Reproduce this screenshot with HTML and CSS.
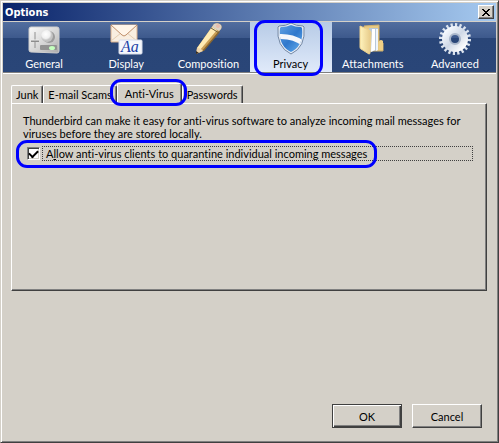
FILE: index.html
```html
<!DOCTYPE html>
<html lang="en">
<head>
    <meta charset="UTF-8">
    <meta name="viewport" content="width=device-width, initial-scale=1.0">
    <title>Options</title>
    <link rel="stylesheet" href="styles.css">
</head>
<body>
<div class="window">
    <header class="titlebar">
        <h1>Options</h1>
        <button type="button" class="close" aria-label="Close">
            <svg width="8" height="7" viewBox="0 0 8 7" shape-rendering="crispEdges"><path d="M0 0h2v1h1v1h2v-1h1v-1h2v1h-1v1h-1v1h-1v1h1v1h1v1h1v1h-2v-1h-1v-1h-2v1h-1v1h-2v-1h1v-1h1v-1h1v-1h-1v-1h-1v-1h-1z"/></svg>
        </button>
    </header>

    <nav class="toolbar">
        <button type="button" class="tool">
            <svg width="34" height="32" viewBox="0 0 34 32">
                <defs><linearGradient id="panelFill" x2="1" y2="1"><stop stop-color="#fafafa"/><stop offset=".6" stop-color="#d2d2d2"/><stop offset="1" stop-color="#a8a8a8"/></linearGradient>
                <radialGradient id="knob" cx=".4" cy=".35"><stop stop-color="#fff"/><stop offset=".7" stop-color="#f0f0f0"/><stop offset="1" stop-color="#c4c4c4"/></radialGradient></defs>
                <path d="M4 4L30 4Q32 4 32 6L32 28Q32 30 30 30L4 29Q2 29 2 27L2 6Q2 4 4 4z" fill="url(#panelFill)" stroke="#cfcfcf"/>
                <path d="M8 9v16" stroke="#909090"/><path d="M4 18h8" stroke="#8c8c8c" stroke-width="2"/><path d="M4 17h8" stroke="#eee"/>
                <circle cx="22" cy="14" r="6" fill="#9c9c9c"/><circle cx="20" cy="13" r="6" fill="url(#knob)"/>
                <rect x="13" y="22" width="17" height="5" rx="1" fill="#929292"/><ellipse cx="25" cy="25" rx="3" ry="2" fill="#c4ffbe"/>
            </svg>
            <span>General</span>
        </button>
        <button type="button" class="tool">
            <svg width="34" height="32" viewBox="0 0 34 32">
                <path d="M2 2h26v17H2z" fill="#f9eee0" stroke="#d9b08c"/><path d="M2 18l10-8M28 18l-10-8" fill="none" stroke="#e5cdb2"/>
                <path d="M2 2l11 10q2 2 4 0L28 2" fill="#fff5e9" stroke="#c08f6a"/>
                <rect x="10" y="17" width="23" height="14" rx="1" fill="#f5f7fc" stroke="#d6dcea"/>
                <text x="12" y="29" class="glyph">Aa</text>
            </svg>
            <span>Display</span>
        </button>
        <button type="button" class="tool">
            <svg width="34" height="32" viewBox="0 0 34 32">
                <path d="M6 25L23 1q4-2 7 1 1 2 0 4L12 28l-7 3z" fill="#c99e55"/>
                <path d="M6 25L21 4l5 3L9 27z" fill="#ffebb4"/><path d="M11 28L28 8l1 1L13 28z" fill="#8b672f"/>
                <path d="M6 25q4 0 6 3l-7 3z" fill="#efd6ae"/><path d="M5 28l3 2-3 1z" fill="#33291f"/>
                <path d="M21 4l2-3q4-2 7 1 1 2 0 4l-2 2z" fill="#dcd3c6"/><path d="M20 5l8 5" stroke="#70613e"/>
                <circle cx="27" cy="3" r="2" fill="#e8bdad"/>
            </svg>
            <span>Composition</span>
        </button>
        <button type="button" class="tool selected">
            <svg width="34" height="32" viewBox="0 0 34 32">
                <defs><linearGradient id="shieldBlue" x2="1" y2="1"><stop stop-color="#6aa9e8"/><stop offset=".5" stop-color="#2f78cc"/><stop offset="1" stop-color="#78c0f8"/></linearGradient>
                <clipPath id="shieldShape"><path d="M7 4q6 0 10-2 4 2 10 2l1 1q2 18-11 24Q4 23 6 5z"/></clipPath></defs>
                <path d="M5 3q7 0 12-3 5 3 12 3l1 1q2 20-13 27Q2 24 4 4z" fill="#e8edf5" stroke="#7186a3"/>
                <g clip-path="url(#shieldShape)"><path d="M3 0h28v32H3z" fill="url(#shieldBlue)"/>
                <path d="M4 11Q19 10 30 18v6Q19 15 4 16z" fill="#f5f7fb"/></g>
            </svg>
            <span>Privacy</span>
            <i class="mark mark-tool"></i>
        </button>
        <button type="button" class="tool">
            <svg width="34" height="32" viewBox="0 0 34 32">
                <defs><linearGradient id="folder" x2="1"><stop stop-color="#fff3bd"/><stop offset="1" stop-color="#e6c987"/></linearGradient></defs>
                <path d="M8 3l15-1v17l4 1v8H12z" fill="#e7ca83" stroke="#d0b06c"/>
                <path d="M13 5h9v22l-9 2z" fill="#b8c7d8"/><path d="M16 6h3v21l-4 2z" fill="#fff"/><path d="M20 6h2v21l-2 1z" fill="#edf4fc"/>
                <path d="M4 3l9 4q2 1 2 3l-1 20q0 1-1 1L5 26q-1 0-1-2z" fill="url(#folder)" stroke="#edd18e"/>
                <path d="M23 18q2-2 4 0v9h-4z" fill="#f0d086"/>
            </svg>
            <span>Attachments</span>
        </button>
        <button type="button" class="tool">
            <svg width="34" height="32" viewBox="0 0 34 32">
                <defs><linearGradient id="gear" x2="1" y2="1"><stop stop-color="#f8fbff"/><stop offset=".5" stop-color="#cfd8e6"/><stop offset="1" stop-color="#fff"/></linearGradient></defs>
                <circle cx="17" cy="16" r="14" fill="none" stroke="#dce4ef" stroke-width="4" stroke-dasharray="2 2" pathLength="80"/>
                <circle cx="17" cy="16" r="9" fill="none" stroke="url(#gear)" stroke-width="8"/>
                <circle cx="17" cy="16" r="5" fill="none" stroke="#a9b6ca" stroke-width="2"/>
            </svg>
            <span>Advanced</span>
        </button>
    </nav>

    <main class="content">
        <div class="tabs" role="tablist">
            <button type="button" class="tab" role="tab">Junk</button>
            <button type="button" class="tab" role="tab">E-mail Scams</button>
            <button type="button" class="tab active" role="tab" aria-selected="true">Anti-Virus<i class="mark mark-tab"></i></button>
            <button type="button" class="tab" role="tab">Passwords</button>
        </div>
        <section class="panel" role="tabpanel">
            <p>Thunderbird can make it easy for anti-virus software to analyze incoming mail messages for viruses before they are stored locally.</p>
            <div class="option">
                <input type="checkbox" id="quarantine" accesskey="l" checked>
                <label for="quarantine">A<u>l</u>low anti-virus clients to quarantine individual incoming messages</label>
                <i class="mark mark-option"></i>
            </div>
        </section>
    </main>

    <footer class="actions">
        <button type="button" class="btn default">OK</button>
        <button type="button" class="btn">Cancel</button>
    </footer>
</div>
</body>
</html>
```
FILE: styles.css
```css
* {
    box-sizing: border-box;
}
body {
    margin: 0;
    background: #d4d0c8;
    color: #000;
    font: 11px/13px Lato, "Liberation Sans", sans-serif;
    font-variant-ligatures: none;
}
button {
    font: inherit;
    font-variant-ligatures: none;
    color: inherit;
    padding: 0;
    border: 0;
    background: none;
}
.window {
    min-height: 100vh;
    display: flex;
    flex-direction: column;
    padding: 1px;
    border: 1px solid;
    border-color: #d4d0c8 #404040 #404040 #d4d0c8;
    box-shadow: inset 1px 1px #fff, inset -1px -1px #808080;
}

/* title bar */
.titlebar {
    display: flex;
    align-items: center;
    justify-content: space-between;
    height: 18px;
    margin: 1px 1px 0;
    padding: 0 2px;
    background: linear-gradient(to right, #0a246a, #a6caf0);
    color: #fff;
}
.titlebar h1 {
    margin: 0;
    font: bold 11px/13px "DejaVu Sans Condensed", sans-serif;
}
.close {
    display: flex;
    align-items: center;
    justify-content: center;
    width: 16px;
    height: 14px;
    background: #d4d0c8;
    color: #000;
    border: 1px solid;
    border-color: #fff #404040 #404040 #fff;
    box-shadow: inset -1px -1px #808080;
}

/* category toolbar */
.toolbar {
    display: flex;
    height: 51px;
    margin: 1px 1px 0;
    background: linear-gradient(#526e9f, #3d598c 16px, #294577 16px, #2a4678);
    border-bottom: 1px solid #808080;
    box-shadow: 0 1px #fff;
    color: #fff;
}
.tool {
    position: relative;
    flex: 1;
    display: flex;
    flex-direction: column;
    align-items: center;
    justify-content: space-between;
    padding: 1px 0 2px;
}
.tool.selected {
    color: #000;
    background: linear-gradient(#b7cbe6, #e0eafa);
}
.glyph {
    font: italic 16px "Liberation Serif", serif;
    fill: #173fa6;
}

/* tabs and panel */
.content {
    flex: 1;
    padding: 10px 10px 0 9px;
}
.tabs {
    display: flex;
    align-items: flex-end;
}
.tab {
    position: relative;
    height: 18px;
    padding: 0 4px;
    border: 1px solid;
    border-color: #fff #404040 transparent #fff;
    border-bottom: 0;
    border-radius: 2px 2px 0 0;
    box-shadow: inset -1px 0 #808080;
}
.tab.active {
    height: 21px;
    padding: 0 7px 2px;
    background: #d4d0c8;
    margin-bottom: -1px;
    z-index: 1;
}
.panel {
    height: 188px;
    padding: 10px 13px 10px 11px;
    border: 1px solid;
    border-color: #fff #404040 #404040 #fff;
    box-shadow: inset -1px -1px #808080;
}
.panel p {
    margin: 0 0 6px;
}
.option {
    position: relative;
    display: flex;
    align-items: center;
    gap: 2px;
    padding-left: 4px;
}
.option input {
    appearance: none;
    display: grid;
    place-items: center;
    width: 13px;
    height: 13px;
    margin: 0;
    background: #fff;
    border: 1px solid;
    border-color: #808080 #fff #fff #808080;
    box-shadow: inset 1px 1px #404040, inset -1px -1px #d4d0c8;
}
.option input:checked::before {
    content: "";
    width: 7px;
    height: 4px;
    border: solid #000;
    border-width: 0 0 2px 2px;
    transform: translateY(-1px) rotate(-45deg);
}
.option label {
    flex: 1;
    padding: 0 3px;
    border: 1px dotted #404040;
}

/* bottom buttons */
.actions {
    display: flex;
    justify-content: flex-end;
    gap: 10px;
    padding: 0 15px 13px;
}
.btn {
    width: 70px;
    height: 24px;
    border: 1px solid;
    border-color: #fff #404040 #404040 #fff;
    box-shadow: inset -1px -1px #808080;
}
.btn.default {
    border-color: #404040;
    box-shadow: inset 1px 1px #fff, inset -1px -1px #404040, inset -2px -2px #808080;
}

/* highlight rings */
.mark {
    position: absolute;
    z-index: 2;
    border: 3px solid #00f;
    border-radius: 11px;
    pointer-events: none;
}
.mark-tool {
    inset: -2px 9px -4px 4px;
}
.mark-tab {
    inset: -5px -6px -2px -8px;
}
.mark-option {
    inset: -6px 96px -7px -7px;
}
```
